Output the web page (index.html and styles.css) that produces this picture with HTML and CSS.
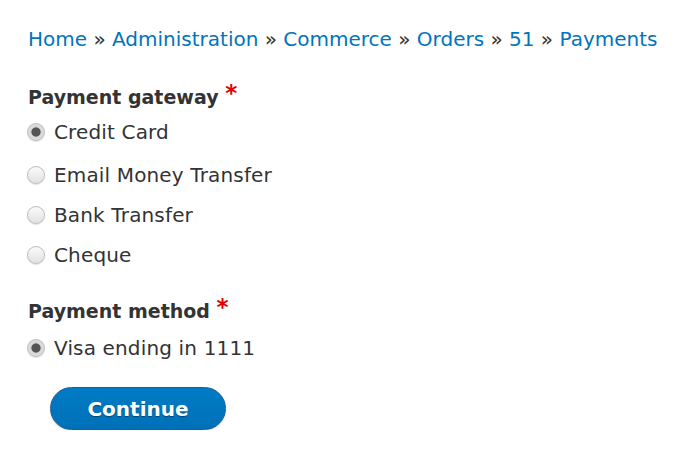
FILE: index.html
```html
<!DOCTYPE html>
<html>
<head>
<meta charset="utf-8">
<link rel="stylesheet" href="styles.css">
</head>
<body>
<div class="page">
  <nav class="breadcrumb">
    <a href="#">Home</a> » <a href="#">Administration</a> » <a href="#">Commerce</a> » <a href="#">Orders</a> » <a href="#">51</a> » <a href="#">Payments</a>
  </nav>
  <form class="form">
    <fieldset class="group">
      <div class="label">Payment gateway <span class="req">*</span></div>
      <label class="option"><input type="radio" name="gw" checked><span>Credit Card</span></label>
      <label class="option"><input type="radio" name="gw"><span>Email Money Transfer</span></label>
      <label class="option"><input type="radio" name="gw"><span>Bank Transfer</span></label>
      <label class="option"><input type="radio" name="gw"><span>Cheque</span></label>
    </fieldset>
    <fieldset class="group">
      <div class="label">Payment method <span class="req">*</span></div>
      <label class="option"><input type="radio" name="pm" checked><span>Visa ending in 1111</span></label>
    </fieldset>
    <div class="actions">
      <button type="button" class="button">Continue</button>
    </div>
  </form>
</div>
</body>
</html>
```
FILE: styles.css
```css
html, body {
  margin: 0;
  padding: 0;
  background: #fff;
}
body {
  font-family: "DejaVu Sans", "Liberation Sans", sans-serif;
  font-size: 20px;
  color: #333;
}
.page {
  padding: 26px 0 0 28px;
}
.breadcrumb {
  line-height: 26px;
  color: #333;
}
.breadcrumb a {
  color: #0074bd;
  text-decoration: none;
}
.form {
  margin-top: 32px;
}
.group {
  border: 0;
  margin: 0 0 30px 0;
  padding: 0;
  display: flex;
  flex-direction: column;
}
.group:last-of-type {
  margin-bottom: 26px;
}
.label {
  font-weight: bold;
  font-size: 19px;
  line-height: 26px;
  margin-bottom: 9px;
}
.group:last-of-type .label {
  margin-bottom: 11px;
}
.req {
  color: #e00000;
  font-weight: bold;
  font-size: 23px;
  line-height: 0;
  vertical-align: 3px;
}
.option {
  display: flex;
  align-items: center;
  gap: 9px;
  height: 26px;
  margin-bottom: 14px;
}
.option:first-of-type {
  margin-bottom: 17px;
}
.option:last-child {
  margin-bottom: 0;
}
.option input {
  appearance: none;
  -webkit-appearance: none;
  margin: 0 0 0 -1px;
  width: 18px;
  height: 18px;
  border-radius: 50%;
  border: 1px solid #bdbdbd;
  background: linear-gradient(#fafafa, #e2e2e2);
  box-shadow: 0 1px 1px rgba(0,0,0,0.12);
  flex: none;
}
.option input:checked {
  background: radial-gradient(circle, #555 0, #555 4.2px, #d6d6d6 5px, #e8e8e8 100%);
}
.option span {
  letter-spacing: 0.15px;
}
.actions {
  padding: 0 0 0 22px;
}
.button {
  font-family: "DejaVu Sans", "Liberation Sans", sans-serif;
  font-size: 20px;
  font-weight: bold;
  color: #fff;
  width: 176px;
  height: 43px;
  border-radius: 22px;
  border: 1px solid #1e5c90;
  background: linear-gradient(#007bc6, #0071b8);
  text-shadow: 0 1px 1px rgba(0,0,0,0.4);
  box-shadow: 0 1px 2px rgba(0,0,0,0.15);
  cursor: pointer;
  padding: 0;
}
```
